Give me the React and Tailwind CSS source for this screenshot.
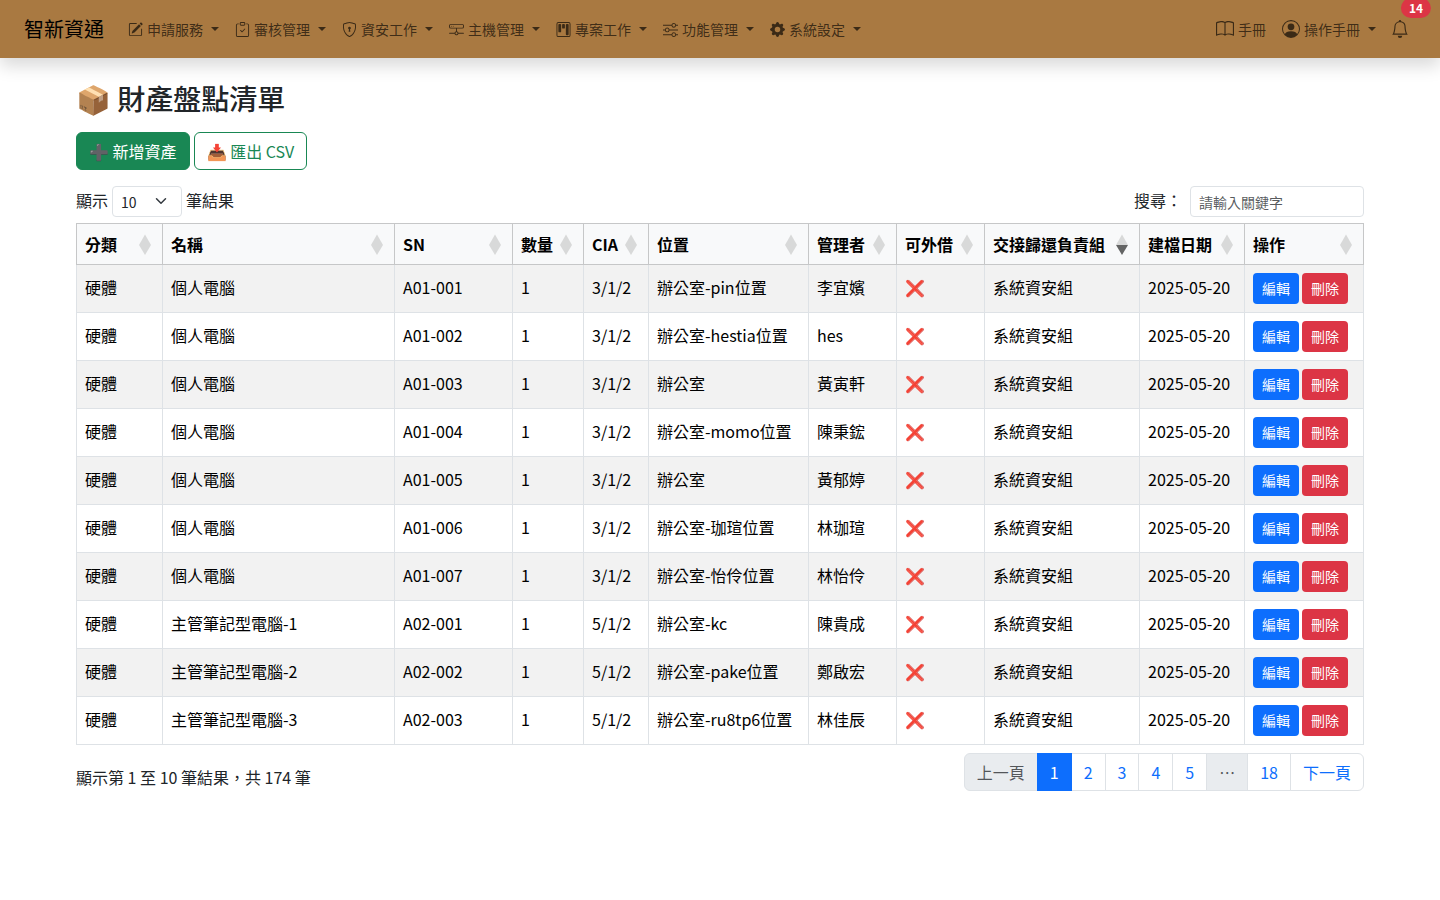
import React from 'react';
import {
  BsPencilSquare,
  BsClipboardCheck,
  BsShieldLock,
  BsHddNetwork,
  BsKanban,
  BsSliders,
  BsGearFill,
  BsBook,
  BsPersonCircle,
  BsBell,
} from 'react-icons/bs';

const navItems = [
  { icon: BsPencilSquare, label: '申請服務' },
  { icon: BsClipboardCheck, label: '審核管理' },
  { icon: BsShieldLock, label: '資安工作' },
  { icon: BsHddNetwork, label: '主機管理' },
  { icon: BsKanban, label: '專案工作' },
  { icon: BsSliders, label: '功能管理' },
  { icon: BsGearFill, label: '系統設定' },
];

const columns = [
  { label: '分類', width: 'w-[86px]' },
  { label: '名稱', width: '' },
  { label: 'SN', width: 'w-[118px]' },
  { label: '數量', width: 'w-[71px]' },
  { label: 'CIA', width: 'w-[65px]' },
  { label: '位置', width: 'w-[160px]' },
  { label: '管理者', width: 'w-[88px]' },
  { label: '可外借', width: 'w-[88px]' },
  { label: '交接歸還負責組', width: 'w-[155px]', sort: 'desc' },
  { label: '建檔日期', width: 'w-[105px]' },
  { label: '操作', width: 'w-[119px]' },
];

const assets = [
  { name: '個人電腦', sn: 'A01-001', cia: '3/1/2', place: '辦公室-pin位置', owner: '李宜嬪' },
  { name: '個人電腦', sn: 'A01-002', cia: '3/1/2', place: '辦公室-hestia位置', owner: 'hes' },
  { name: '個人電腦', sn: 'A01-003', cia: '3/1/2', place: '辦公室', owner: '黃寅軒' },
  { name: '個人電腦', sn: 'A01-004', cia: '3/1/2', place: '辦公室-momo位置', owner: '陳秉鋐' },
  { name: '個人電腦', sn: 'A01-005', cia: '3/1/2', place: '辦公室', owner: '黃郁婷' },
  { name: '個人電腦', sn: 'A01-006', cia: '3/1/2', place: '辦公室-珈瑄位置', owner: '林珈瑄' },
  { name: '個人電腦', sn: 'A01-007', cia: '3/1/2', place: '辦公室-怡伶位置', owner: '林怡伶' },
  { name: '主管筆記型電腦-1', sn: 'A02-001', cia: '5/1/2', place: '辦公室-kc', owner: '陳貴成' },
  { name: '主管筆記型電腦-2', sn: 'A02-002', cia: '5/1/2', place: '辦公室-pake位置', owner: '鄭啟宏' },
  { name: '主管筆記型電腦-3', sn: 'A02-003', cia: '5/1/2', place: '辦公室-ru8tp6位置', owner: '林佳辰' },
];

const pages = ['上一頁', '1', '2', '3', '4', '5', '…', '18', '下一頁'];

const Caret = () => (
  <span className="ml-1 border-x-4 border-t-4 border-x-transparent border-t-current" />
);

const SortIcon = ({ sort }) => (
  <svg width="12" height="22" viewBox="0 0 12 22" className="shrink-0" aria-hidden="true">
    <path d="M6 1.5L12 12H0z" fill="#d8d9d9" />
    <path d="M0 12H12L6 22z" fill={sort === 'desc' ? '#636464' : '#d8d9d9'} />
  </svg>
);

const Navbar = () => (
  <nav className="flex min-h-[58px] items-center bg-[#a97941] px-6 text-sm text-black/65 shadow-[0_8px_16px_rgba(0,0,0,0.15)]">
    <a href="#" className="mr-4 text-xl text-black">智新資通</a>
    <ul className="flex">
      {navItems.map(({ icon: Icon, label }) => (
        <li key={label}>
          <button type="button" className="flex items-center gap-1 px-2 py-2 leading-6">
            <Icon size={15} />
            {label}
            <Caret />
          </button>
        </li>
      ))}
    </ul>
    <div className="ml-auto flex items-center">
      <a href="#" className="flex items-center gap-1 px-2 py-2 leading-6">
        <BsBook size={18} />
        手冊
      </a>
      <button type="button" className="flex items-center gap-1 px-2 py-2 leading-6">
        <BsPersonCircle size={18} />
        操作手冊
        <Caret />
      </button>
      <button type="button" className="relative px-[7px] py-3" aria-label="14">
        <BsBell size={18} />
        <span className="absolute left-full top-0 -translate-x-1/2 -translate-y-1/2 rounded-full bg-[#dc3545] px-2 py-1 text-xs leading-3 font-bold text-white">
          14
        </span>
      </button>
    </div>
  </nav>
);

const AssetTable = () => (
  <table className="w-full table-fixed border-collapse text-left text-black">
    <thead>
      <tr className="bg-[#f8f9fa]">
        {columns.map((col) => (
          <th key={col.label} className={`border border-[#c6c7c8] p-2 font-bold ${col.width}`}>
            <div className="flex items-center justify-between pr-[3px] whitespace-nowrap">
              {col.label}
              <SortIcon sort={col.sort} />
            </div>
          </th>
        ))}
      </tr>
    </thead>
    <tbody className="[&_td]:border [&_td]:border-[#dee2e6] [&_td]:p-2 [&_td]:align-baseline [&_td]:whitespace-nowrap">
      {assets.map((asset) => (
        <tr key={asset.sn} className="odd:bg-[#f2f2f2]">
          <td>硬體</td>
          <td>{asset.name}</td>
          <td>{asset.sn}</td>
          <td>1</td>
          <td>{asset.cia}</td>
          <td>{asset.place}</td>
          <td>{asset.owner}</td>
          <td>❌</td>
          <td>系統資安組</td>
          <td>2025-05-20</td>
          <td>
            <div className="flex gap-[3px] text-sm text-white">
              <button type="button" className="rounded bg-[#0d6efd] px-[9px] py-[5px] leading-[21px]">編輯</button>
              <button type="button" className="rounded bg-[#dc3545] px-[9px] py-[5px] leading-[21px]">刪除</button>
            </div>
          </td>
        </tr>
      ))}
    </tbody>
  </table>
);

const Pagination = () => (
  <ul className="flex">
    {pages.map((page) => {
      let color = 'border-[#dee2e6] bg-white text-[#0d6efd]';
      if (page === '1') color = 'relative border-[#0d6efd] bg-[#0d6efd] text-white';
      if (page === '上一頁' || page === '…') color = 'border-[#dee2e6] bg-[#e9ecef] text-[#212529]/75';
      return (
        <li key={page} className="group -ml-px first:ml-0">
          <a
            href="#"
            className={`block border px-3 py-[6px] group-first:rounded-l-md group-last:rounded-r-md ${color}`}
          >
            {page}
          </a>
        </li>
      );
    })}
  </ul>
);

const App = () => {
  return (
    <div lang="zh-Hant" className="min-h-screen bg-white font-['Noto_Sans_CJK_TC',sans-serif] text-base text-[#212529]">
      <Navbar />

      <main className="mx-auto max-w-[1320px] px-4 pt-6">
        <h2 className="mb-4 pb-[2px] text-[28px] leading-[32px] font-medium">📦 財產盤點清單</h2>

        <div className="mb-4 flex gap-1">
          <button type="button" className="rounded-md border border-[#198754] bg-[#198754] px-3 py-[6px] text-white">
            ➕ 新增資產
          </button>
          <button type="button" className="rounded-md border border-[#198754] px-3 py-[6px] text-[#198754]">
            📥 匯出 CSV
          </button>
        </div>

        {/* Page length and search */}
        <div className="mb-[6px] flex items-center justify-between leading-[29px]">
          <label className="flex items-start gap-1">
            顯示
            <span className="relative flex">
              <select
                defaultValue="10"
                className="h-[31px] w-[70px] appearance-none rounded border border-[#dee2e6] bg-white pl-2 text-sm"
              >
                <option>10</option>
                <option>25</option>
                <option>50</option>
                <option>100</option>
              </select>
              <svg
                className="pointer-events-none absolute top-[9px] right-[15px]"
                width="12"
                height="12"
                viewBox="0 0 16 16"
                fill="none"
                stroke="#343a40"
                strokeWidth="2"
                strokeLinecap="round"
                strokeLinejoin="round"
              >
                <path d="m2 5 6 6 6-6" />
              </svg>
            </span>
            筆結果
          </label>
          <label className="flex items-start gap-2">
            搜尋：
            <input
              type="search"
              placeholder="請輸入關鍵字"
              className="h-[31px] w-[174px] rounded border border-[#dee2e6] px-2 text-sm placeholder:text-[#212529]/75"
            />
          </label>
        </div>

        <AssetTable />

        <div className="mt-2 flex items-start justify-between">
          <p className="pt-3">顯示第 1 至 10 筆結果，共 174 筆</p>
          <Pagination />
        </div>
      </main>
    </div>
  );
};

export default App;
